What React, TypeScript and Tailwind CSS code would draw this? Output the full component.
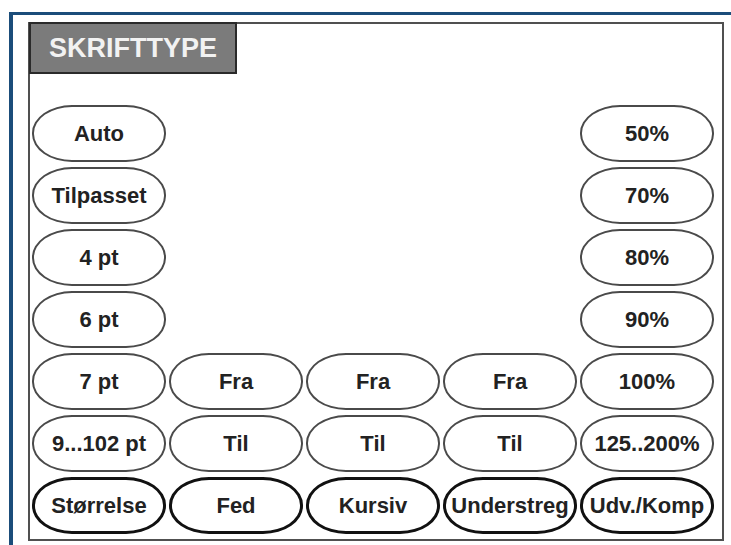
const rows: (string | null)[][] = [
  ["Auto", null, null, null, "50%"],
  ["Tilpasset", null, null, null, "70%"],
  ["4 pt", null, null, null, "80%"],
  ["6 pt", null, null, null, "90%"],
  ["7 pt", "Fra", "Fra", "Fra", "100%"],
  ["9...102 pt", "Til", "Til", "Til", "125..200%"],
];

const tabs = ["Størrelse", "Fed", "Kursiv", "Understreg", "Udv./Komp"];

function Pill({ label, bold }: { label: string; bold?: boolean }) {
  return (
    <button
      className={`h-[57px] rounded-[40px_/_28px] bg-white flex items-center justify-center text-[22px] font-bold text-[#222] whitespace-nowrap ${
        bold ? "border-[3px] border-[#111]" : "border-2 border-[#4a4a4a]"
      }`}
    >
      {label}
    </button>
  );
}

export default function App() {
  return (
    <div
      className="w-[731px] h-[545px] bg-white pt-3 pl-[9px] overflow-hidden"
      style={{ fontFamily: '"Liberation Sans", Arial, sans-serif' }}
    >
      <div className="h-full border-t-[3px] border-l-4 border-[#1b4d7a] pl-[15px] pt-[7px]">
        <div className="w-[696px] h-[519px] border-2 border-[#505050] bg-white">
          <div className="-mt-[2px] -ml-[1px] w-[208px] h-[52px] bg-[#7b7b7b] border-2 border-[#2a2a2a] flex items-center justify-center">
            <span className="text-[27px] font-bold text-[#f2f2f2]">SKRIFTTYPE</span>
          </div>

          <div className="mt-[31px] pl-[2px] grid grid-cols-[repeat(5,134px)] gap-x-[3px] gap-y-[5px]">
            {rows.map((row, r) =>
              row.map((cell, c) =>
                cell ? <Pill key={`${r}-${c}`} label={cell} /> : <div key={`${r}-${c}`} />
              )
            )}
            {tabs.map((t) => (
              <Pill key={t} label={t} bold />
            ))}
          </div>
        </div>
      </div>
    </div>
  );
}
